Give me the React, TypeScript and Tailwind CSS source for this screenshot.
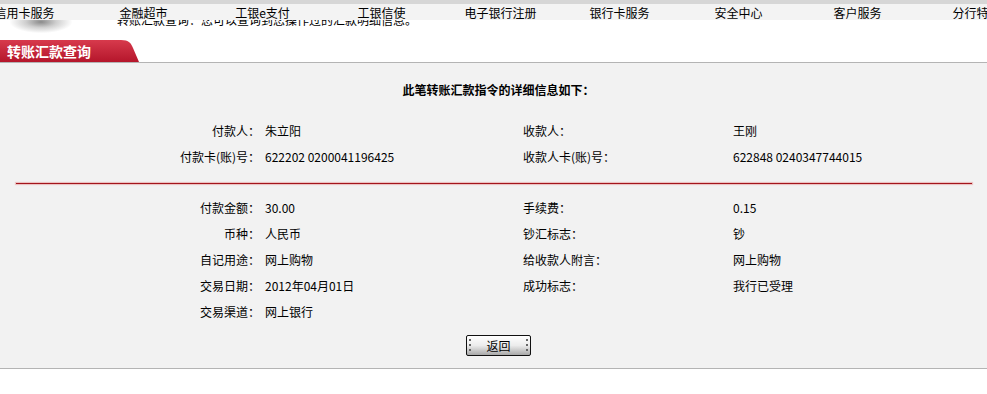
import React from "react";

const NAV = ["信用卡服务", "金融超市", "工银e支付", "工银信使", "电子银行注册", "银行卡服务", "安全中心", "客户服务", "分行特色"];

const TOP_ROWS: [string, string, string, string][] = [
  ["付款人：", "朱立阳", "收款人：", "王刚"],
  ["付款卡(账)号：", "622202 0200041196425", "收款人卡(账)号：", "622848 0240347744015"],
];

const DETAIL_ROWS: [string, string, string?, string?][] = [
  ["付款金额：", "30.00", "手续费：", "0.15"],
  ["币种：", "人民币", "钞汇标志：", "钞"],
  ["自记用途：", "网上购物", "给收款人附言：", "网上购物"],
  ["交易日期：", "2012年04月01日", "成功标志：", "我行已受理"],
  ["交易渠道：", "网上银行"],
];

function Row({ cells }: { cells: (string | undefined)[] }) {
  return (
    <div className="grid h-[26px] grid-cols-[260px_263px_210px_1fr] items-center whitespace-nowrap">
      <span className="text-right">{cells[0]}</span>
      <span className="pl-[5px]">{cells[1]}</span>
      <span>{cells[2] ?? ""}</span>
      <span>{cells[3] ?? ""}</span>
    </div>
  );
}

function Dots({ side }: { side: "left" | "right" }) {
  const pos = side === "left" ? "left-[2px]" : "right-[2px]";
  return (
    <span className={`absolute top-[3px] ${pos} flex flex-col gap-[3px]`}>
      <span className="h-[2px] w-[2px] bg-[#666]" />
      <span className="h-[2px] w-[2px] bg-[#666]" />
      <span className="h-[2px] w-[2px] bg-[#666]" />
    </span>
  );
}

export default function App() {
  return (
    <div
      className="relative h-[394px] w-full overflow-hidden bg-white text-[12px] text-black"
      style={{ fontFamily: '"Noto Sans CJK SC", "Noto Sans", sans-serif' }}
    >
      {/* top strip + nav */}
      <div className="h-[4px] bg-[#d6d6d6]" />
      <div className="flex h-[16px] bg-[#f3f3f3] leading-[17px]">
        <div className="ml-[-35px] flex">
          {NAV.map((n) => (
            <span key={n} className="w-[119px] shrink-0 whitespace-nowrap text-center">{n}</span>
          ))}
        </div>
      </div>

      {/* clipped intro line */}
      <div className="relative h-[20px] overflow-hidden">
        <div className="absolute left-[10px] top-0 h-[13px] w-[62px] bg-[radial-gradient(ellipse_at_50%_15%,#8a8a8a_0%,#cfcfcf_35%,rgba(255,255,255,0)_72%)]" />
        <p className="ml-[117px] mt-[-6px] whitespace-nowrap leading-[12px]">转账汇款查询：您可以查询到您操作过的汇款明细信息。</p>
      </div>

      {/* tab */}
      <div className="h-[23px] border-b border-[#b4b4b4]">
        <div className="relative h-[22px] w-[140px]">
          <svg className="absolute inset-0" width="140" height="22" viewBox="0 0 140 22">
            <defs>
              <linearGradient id="tabg" x1="0" y1="0" x2="0" y2="1">
                <stop offset="0" stopColor="#d73a4c" />
                <stop offset="1" stopColor="#b5162b" />
              </linearGradient>
            </defs>
            <path d="M0 0 H121 C129 0 131 3 133 8 L139 22 H0 Z" fill="url(#tabg)" />
          </svg>
          <span className="relative block pl-[7px] text-[14px] font-bold leading-[22px] text-white">转账汇款查询</span>
        </div>
      </div>

      {/* panel */}
      <div className="border-b border-[#b4b4b4] bg-[#f2f2f2] pb-[12px] pt-[19px]">
        <p className="pl-[10px] text-center font-bold leading-[16px]">此笔转账汇款指令的详细信息如下：</p>

        <div className="mt-[20px]">
          {TOP_ROWS.map((r) => (
            <Row key={r[0]} cells={r} />
          ))}
        </div>

        <div className="ml-[16px] mt-[13px] h-[1px] w-[956px] bg-[#a3151c] shadow-[0_0_1px_1px_rgba(220,90,90,0.35)]" />

        <div className="mt-[11px]">
          {DETAIL_ROWS.map((r) => (
            <Row key={r[0]} cells={r} />
          ))}
        </div>

        <div className="mt-[10px] flex justify-center pl-[10px]">
          <button className="relative h-[21px] w-[65px] rounded-[2px] border border-[#111] bg-gradient-to-b from-white via-[#ececec] to-[#a9a9a9] text-[12px] leading-[19px] text-black">
            <Dots side="left" />
            返回
            <Dots side="right" />
          </button>
        </div>
      </div>
    </div>
  );
}
